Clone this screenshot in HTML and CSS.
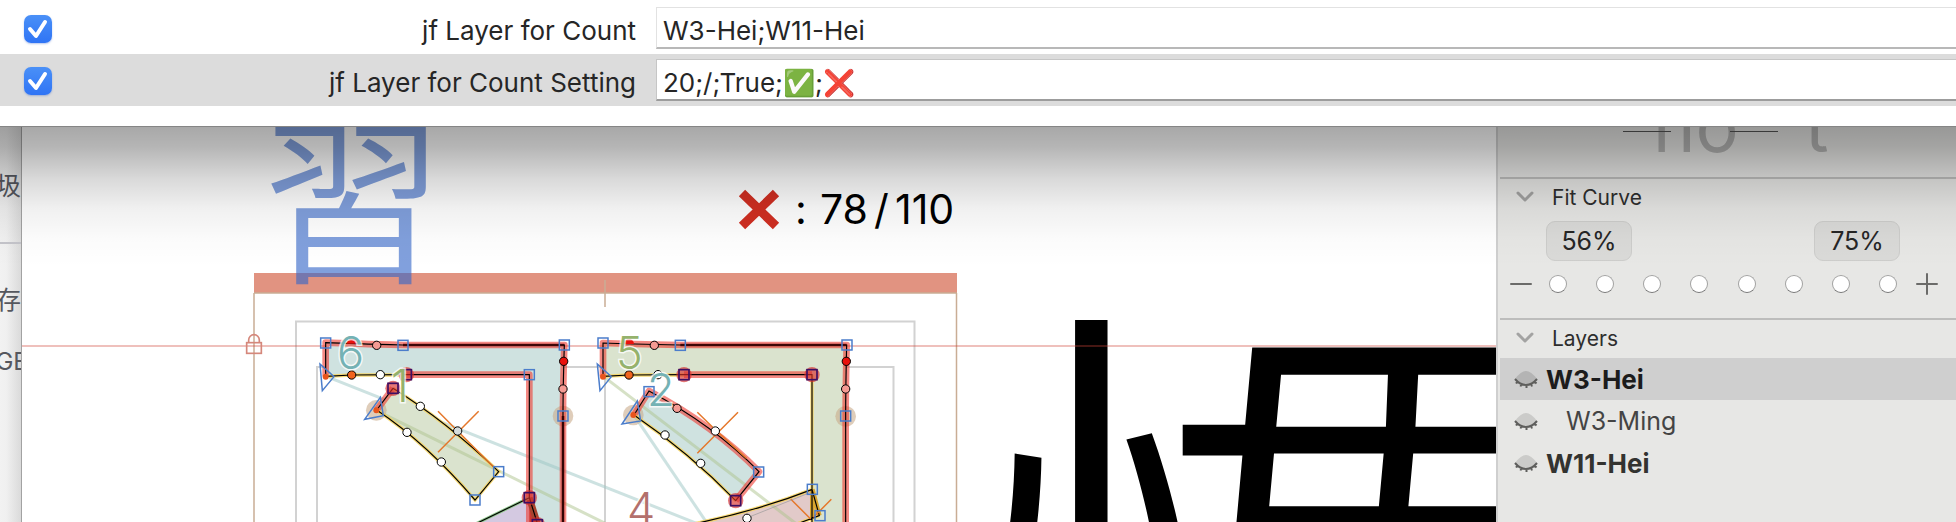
FILE: index.html
```html
<!DOCTYPE html>
<html lang="zh-Hant">
<head>
<meta charset="utf-8">
<title>Glyph Editor</title>
<link rel="stylesheet" href="styles.css">
</head>
<body>
<form class="sheet">
  <div class="param">
    <input class="check" type="checkbox" id="on1" checked aria-label="Enable jf Layer for Count">
    <label class="param-name" for="val1">jf Layer for Count</label>
    <div class="field"><input class="value" type="text" id="val1" value="W3-Hei;W11-Hei"></div>
  </div>
  <div class="param selected">
    <input class="check" type="checkbox" id="on2" checked aria-label="Enable jf Layer for Count Setting">
    <label class="param-name" for="val2">jf Layer for Count Setting</label>
    <div class="field"><input class="value" type="text" id="val2" value="20;/;True;✅;❌"></div>
  </div>
</form>
<main class="window">
  <aside class="behind">
    <span class="behind-text">圾</span>
    <hr class="behind-rule">
    <span class="behind-text">存</span>
    <span class="behind-text unit">GB</span>
  </aside>
  <svg class="canvas" viewBox="22 127 1474 395" preserveAspectRatio="xMinYMin slice" role="img" aria-label="Glyph outlines">
    <defs>
      <rect id="node" x="-15" y="-15" width="30" height="30" class="node"/>
      <g id="stem"><circle r="23" class="halo-red"/><rect x="-15" y="-15" width="30" height="30" class="node-dark"/></g>
      <circle id="ctl" r="12.5" class="ctl"/>
    </defs>
    <rect x="254" y="273" width="703" height="20" class="bar"/>
    <text x="262" y="269" class="ghost">習</text>
    <text x="957" y="907" class="big">慣</text>
    <path d="M254 293H957" class="metric"/>
    <path d="M254 293V530M956.500 293V530M605 280V307" class="metric"/>
    <path d="M296 530V321.500H914.500V530M317 530V367H893.500V530M605 367V530" class="frame"/>
    <path d="M22 346H1496" class="guide"/>

    <g transform="translate(240 310) scale(.333333)">
      <g class="lock"><rect x="20" y="98" width="44" height="32"/><path d="M26 98V90A16 16 0 0 1 58 90V98"/></g>
      <path d="M257 98Q335 101 489 105H973Q969 237 969 318V660H898L868 563V194H499L257 199Z" class="fill-teal"/>
      <path d="M868 563L700 645H892Z" class="fill-violet"/>
      <path d="M892 640L868 563V660Z" class="fill-dark"/>
      <path d="M268 203L1370 640" class="link-teal"/>
      <path d="M459 235Q620 335 776 485L705 570Q560 400 410 300Z" class="fill-green"/>
      <path d="M410 302L1110 647" class="link-green"/>
      <circle cx="409" cy="301" r="31" class="start"/><circle cx="969" cy="318" r="31" class="start"/>
      <path d="M257 199L257 98Q335 101 489 105H973Q969 237 969 318V660M499 194H868V660M410 300L459 235" class="glow-red"/>
      <path d="M489 105H973M969 318V660" class="core"/>
      <path d="M868 563L892 640" class="glow-dark"/>
      <path d="M257 199L335 195H499M459 235Q620 335 776 485L705 570Q560 400 410 300" class="glow-yellow"/>
      <path d="M868 563L700 645" class="glow-lime"/>
      <path d="M257 199L257 98Q335 101 489 105H973Q969 237 969 318V660M257 199L335 195L499 194H868V563L892 640M868 563L700 645M459 235Q620 335 776 485L705 570Q560 400 410 300Z" class="ink"/>
      <path d="M594 304L652 362L760 470M716 304L594 427" class="cross"/>
      <circle cx="257" cy="200" r="9" class="dot"/><circle cx="409" cy="301" r="9" class="dot"/>
      <path d="M240 162L282 200L247 242ZM421 262L430 317L374 328Z" class="arrow"/>
      <use href="#node" x="257" y="99"/><use href="#node" x="489" y="106"/><use href="#node" x="973" y="105"/><use href="#node" x="868" y="194"/>
      <use href="#node" x="776" y="485"/><use href="#node" x="705" y="570"/><use href="#node" x="969" y="318"/>
      <use href="#stem" x="499" y="194"/><use href="#stem" x="459" y="235"/><use href="#stem" x="868" y="563"/><use href="#stem" x="892" y="644"/>
      <path d="M320 101A15 15 0 0 1 350 101Z" class="red-cap"/>
      <use href="#ctl" x="410" y="106" class="pink"/><use href="#ctl" x="335" y="195" class="orange"/><use href="#ctl" x="421" y="194" class="white"/>
      <use href="#ctl" x="971" y="154" class="red"/><use href="#ctl" x="969" y="237" class="pink"/>
      <use href="#ctl" x="541" y="289" class="white"/><use href="#ctl" x="653" y="363" class="grey"/><use href="#ctl" x="604" y="456" class="white"/><use href="#ctl" x="501" y="367" class="white"/>
    </g>

    <g transform="translate(580 310) scale(.333333)">
      <path d="M69 99Q147 102 301 105H800Q797 237 797 318V660H696V194H312L69 199Z" class="fill-green"/>
      <path d="M340 642Q540 600 697 538L718 617L640 642Z" class="fill-rose"/>
      <path d="M207 243Q400 345 537 485L467 572Q330 430 162 315Z" class="fill-teal"/>
      <path d="M75 203L660 650" class="link-green"/>
      <path d="M165 320L385 645" class="link-teal"/>
      <circle cx="160" cy="315" r="31" class="start"/><circle cx="797" cy="319" r="31" class="start"/>
      <path d="M69 199V99Q147 102 301 105H800Q797 237 797 318V660M312 194H696M162 315L207 243Q400 345 537 485L467 572" class="glow-red"/>
      <path d="M301 105H800" class="core"/>
      <path d="M69 199L147 195H312M696 194V538M696 625V660M467 572Q330 430 162 315M340 642Q540 600 697 538M718 617L650 642" class="glow-yellow"/>
      <path d="M697 538L718 617M697 538V625" class="glow-gold"/>
      <path d="M69 199V99Q147 102 301 105H800Q797 237 797 318V660M69 199L147 195L312 194H696V538L718 617L650 642M696 538V660M340 642Q540 600 697 538M207 243Q400 345 537 485L467 572Q330 430 162 315Z" class="ink"/>
      <path d="M352 307L412 365L500 445M474 307L352 430M632 567L692 627M754 568L700 622" class="cross"/>
      <path d="M510 620L692 547" class="handle"/>
      <circle cx="69" cy="200" r="9" class="dot"/><circle cx="160" cy="315" r="9" class="dot"/>
      <path d="M52 162L94 200L60 242ZM172 273L182 333L126 342Z" class="arrow"/>
      <use href="#node" x="69" y="99"/><use href="#node" x="301" y="106"/><use href="#node" x="801" y="105"/><use href="#node" x="207" y="245"/>
      <use href="#node" x="536" y="486"/><use href="#node" x="797" y="318"/><use href="#node" x="697" y="538"/><use href="#node" x="720" y="617"/>
      <use href="#stem" x="312" y="194"/><use href="#stem" x="696" y="194"/><use href="#stem" x="467" y="572"/>
      <path d="M132 102A15 15 0 0 1 162 102Z" class="red-cap"/>
      <use href="#ctl" x="223" y="106" class="pink"/><use href="#ctl" x="147" y="195" class="orange"/><use href="#ctl" x="234" y="194" class="white"/>
      <use href="#ctl" x="799" y="154" class="red"/><use href="#ctl" x="797" y="237" class="pink"/>
      <use href="#ctl" x="291" y="295" class="pink"/><use href="#ctl" x="406" y="363" class="white"/><use href="#ctl" x="362" y="460" class="white"/><use href="#ctl" x="255" y="375" class="white"/><use href="#ctl" x="501" y="625" class="white"/>
    </g>

    <text x="337" y="369" class="num teal">6</text>
    <text x="391" y="402" class="num green">1</text>
    <text x="616" y="369" class="num green">5</text>
    <text x="647" y="406" class="num teal">2</text>
    <text x="627" y="525" class="num rose">4</text>

    <path d="M742 193L776 226M776 193L742 226" class="fail"/>
    <text y="224" class="score"><tspan x="795">:</tspan> <tspan x="820">78</tspan> <tspan x="874">/</tspan> <tspan x="895">110</tspan></text>
  </svg>
  <aside class="sidebar">
    <svg class="preview" viewBox="0 0 456 50" width="456" height="50" aria-label="Spacing preview">
      <text y="25" class="sample"><tspan x="153">no</tspan> <tspan x="305">t</tspan></text>
      <path d="M123 4.500H171M230 4.500H278" class="sample-line"/>
    </svg>
    <section class="panel">
      <h2 class="title"><svg class="chevron" viewBox="0 0 18 12"><path d="M2 2L9 9L16 2"/></svg>Fit Curve</h2>
      <div class="percents"><button type="button" class="percent">56%</button><button type="button" class="percent">75%</button></div>
      <div class="steps">
        <button type="button" class="step" aria-label="Less"><svg viewBox="0 0 22 22"><path d="M1 11H21"/></svg></button>
        <div class="dots">
          <button type="button" class="knob" aria-label="Fit 1"></button><button type="button" class="knob" aria-label="Fit 2"></button><button type="button" class="knob" aria-label="Fit 3"></button><button type="button" class="knob" aria-label="Fit 4"></button><button type="button" class="knob" aria-label="Fit 5"></button><button type="button" class="knob" aria-label="Fit 6"></button><button type="button" class="knob" aria-label="Fit 7"></button><button type="button" class="knob" aria-label="Fit 8"></button>
        </div>
        <button type="button" class="step" aria-label="More"><svg viewBox="0 0 22 22"><path d="M1 11H21M11 1V21"/></svg></button>
      </div>
    </section>
    <section class="panel">
      <h2 class="title"><svg class="chevron" viewBox="0 0 18 12"><path d="M2 2L9 9L16 2"/></svg>Layers</h2>
      <ul class="layers">
        <li class="layer master active"><svg class="eye" viewBox="0 0 24 19"><path class="lid" d="M1 9Q7 1 12 1T23 9Q18 15 12 15T1 9Z"/><path class="lash" d="M1 9Q6 15 12 15T23 9M3.500 11.500L2 13.500M7.500 14L6.500 16.500M12.500 15V18M17 14L18 16.500M20.500 11.500L22.500 13.500"/></svg>W3-Hei</li>
        <li class="layer child"><svg class="eye" viewBox="0 0 24 19"><path class="lid" d="M1 9Q7 1 12 1T23 9Q18 15 12 15T1 9Z"/><path class="lash" d="M1 9Q6 15 12 15T23 9M3.500 11.500L2 13.500M7.500 14L6.500 16.500M12.500 15V18M17 14L18 16.500M20.500 11.500L22.500 13.500"/></svg>W3-Ming</li>
        <li class="layer master"><svg class="eye" viewBox="0 0 24 19"><path class="lid" d="M1 9Q7 1 12 1T23 9Q18 15 12 15T1 9Z"/><path class="lash" d="M1 9Q6 15 12 15T23 9M3.500 11.500L2 13.500M7.500 14L6.500 16.500M12.500 15V18M17 14L18 16.500M20.500 11.500L22.500 13.500"/></svg>W11-Hei</li>
      </ul>
    </section>
  </aside>
</main>
</body>
</html>
```
FILE: styles.css
```css
* { box-sizing: border-box; }
body {
  margin: 0;
  min-height: 100vh;
  display: flex;
  flex-direction: column;
  background: #fff;
  color: #262626;
  font-family: Inter, "Liberation Sans", "Noto Sans CJK TC", sans-serif;
  overflow: hidden;
}
button { font: inherit; color: inherit; padding: 0; border: 0; background: none; }

/* parameter sheet */
.sheet { padding-bottom: 20px; border-bottom: 1px solid #858585; }
.param {
  display: grid;
  grid-template-columns: 28px 584px 1fr;
  align-items: center;
  padding: 5px 0 5px 24px;
  height: 52px;
}
.param:first-child { height: 54px; padding-top: 7px; }
.selected { background: #dcdcdc; }
.check {
  appearance: none;
  margin: 2px 0 0;
  width: 28px;
  height: 28px;
  border-radius: 7px;
  box-shadow: 0 1px 2px rgba(40, 90, 200, .35);
  background: url("data:image/svg+xml,%3Csvg xmlns='http://www.w3.org/2000/svg' viewBox='0 0 28 28'%3E%3Cpath d='M6 14L12 21L21 7' fill='none' stroke='white' stroke-width='4' stroke-linecap='round' stroke-linejoin='round'/%3E%3C/svg%3E"), linear-gradient(#4a90f7, #2f74f5);
}
.param-name { text-align: right; font-size: 26px; line-height: 36px; padding-top: 6px; }
.field { margin-left: 20px; }
.value {
  display: block;
  width: 100%;
  height: 42px;
  padding: 6px 6px 0;
  border: 1px solid #e2e2e2;
  border-right: 0;
  border-bottom: 2px solid #b8b8b8;
  border-radius: 0;
  background: #fff;
  color: #262626;
  font: inherit;
  font-size: 26px;
  outline: 0;
}
.selected .value { border-color: #c6c6c6 #c6c6c6 #9c9c9c; }

/* window under the sheet, darkened by the sheet's shadow */
.window { flex: 1; display: flex; position: relative; }
.window::after {
  content: "";
  position: absolute;
  inset: 0 0 auto 0;
  height: 140px;
  pointer-events: none;
  background: linear-gradient(rgba(0,0,0,.34), rgba(0,0,0,.29) 14%, rgba(0,0,0,.15) 37%, rgba(0,0,0,.06) 58%, rgba(0,0,0,.015) 80%, rgba(0,0,0,0));
}
.behind {
  width: 22px;
  flex: none;
  overflow: hidden;
  padding-top: 39px;
  display: flex;
  flex-direction: column;
  align-items: flex-end;
  background: linear-gradient(90deg, #f2f2f2, #f0f0f0 30%, #dadada);
  border-right: 1px solid #a2a2a2;
  color: #55575e;
}
.behind-text { font-size: 25px; line-height: 40px; white-space: nowrap; }
.behind-rule { width: 100%; height: 2px; margin: 36px 0; border: 0; background: #c4c4ca; flex: none; }
.unit { font-size: 24px; margin: 22px -8px 0 0; }

/* edit canvas */
.canvas { flex: 1; min-width: 0; display: block; background: #fff; }
.canvas path { fill: none; }
.bar { fill: #e19381; }
.ghost { font: 350 182px "Noto Sans CJK TC", sans-serif; fill: #3466c8; fill-opacity: .62; }
.big { font: 300 703px "Noto Sans CJK TC", sans-serif; fill: #000; }
.metric { stroke: #c9ad95; stroke-width: 1.5; }
.frame { stroke: #d2d2d2; stroke-width: 2; }
.guide { stroke: #d0453a; stroke-opacity: .45; stroke-width: 1.5; }
.lock rect, .lock path { fill: none; stroke: #d5877b; stroke-width: 5; }
.canvas .fill-teal { fill: #cfe2e0; }
.canvas .fill-green { fill: #dae3ce; }
.canvas .fill-violet { fill: #d4c9e1; }
.canvas .fill-rose { fill: #e2cac9; }
.canvas .fill-dark { fill: #a43434; }
.link-teal { stroke: #9cc6c4; stroke-opacity: .5; stroke-width: 9; }
.link-green { stroke: #adc48e; stroke-opacity: .5; stroke-width: 9; }
.start { fill: #c9ab8c; fill-opacity: .6; }
.glow-red { stroke: #ee3a30; stroke-opacity: .6; stroke-width: 20; stroke-linejoin: round; }
.core { stroke: #7c0c0c; stroke-width: 8; }
.glow-dark { stroke: #a8442f; stroke-width: 20; }
.glow-yellow { stroke: #f6d35e; stroke-opacity: .85; stroke-width: 10; }
.glow-gold { stroke: #d9a52e; stroke-width: 14; }
.glow-lime { stroke: #8fc88c; stroke-width: 9; }
.ink { stroke: #000; stroke-width: 3.5; }
.cross { stroke: #e5782c; stroke-width: 4.5; }
.handle { stroke: #999; stroke-width: 2; }
.dot { fill: #e8541c; }
.arrow { stroke: #4b7dcb; stroke-width: 4.5; }
.node { fill: none; stroke: #4b7dcb; stroke-width: 4.5; }
.node-dark { fill: none; stroke: #3d0e63; stroke-width: 5; }
.halo-red { fill: #d8302c; fill-opacity: .65; }
.ctl { stroke: #000; stroke-width: 3; }
.white { fill: #fff; }
.pink { fill: #f59a93; }
.red { fill: #e8110c; }
.orange { fill: #f0641e; }
.grey { fill: #d5dcdc; }
.canvas .red-cap { fill: #e8110c; }
.num { font: 300 45px Inter, sans-serif; paint-order: stroke; stroke: #fff; stroke-opacity: .8; stroke-width: 3; }
.teal { fill: #74b2b4; }
.green { fill: #95b26c; }
.rose { fill: #b3706c; }
.fail { stroke: #d12f22; stroke-width: 9; }
.score { font: 41px Inter, sans-serif; fill: #000; }

/* sidebar */
.sidebar { flex: none; width: 460px; padding-left: 2px; border-left: 2px solid #cfcfcf; background: #e7e7e5; }
.preview { display: block; width: 100%; overflow: hidden; }
.sample { font: 72px Inter, sans-serif; fill: #b4b4b3; }
.sample-line { stroke: #555; }
.panel { border-top: 2px solid #bdbdbc; padding-bottom: 11px; }
.title { display: flex; align-items: center; gap: 18px; height: 36px; margin: 0 0 2px; padding-left: 16px; font-size: 21px; font-weight: 400; color: #2e2e2e; }
.chevron { width: 18px; height: 12px; fill: none; stroke: #a3a3a2; stroke-width: 3; stroke-linecap: round; stroke-linejoin: round; }
.percents { display: flex; justify-content: space-between; padding: 4px 56px 0 46px; }
.percent { width: 86px; height: 40px; border: 1px solid #cdcdcb; border-radius: 9px; background: #dadad8; font-size: 25px; }
.steps { display: flex; align-items: center; height: 46px; padding: 0 18px 0 10px; }
.step { width: 22px; height: 22px; }
.step svg { display: block; fill: none; stroke: #6b6b69; stroke-width: 2; stroke-linecap: round; }
.dots { flex: 1; display: flex; justify-content: space-between; padding: 0 19px 0 17px; }
.knob { width: 18px; height: 18px; border: 1px solid #a2a2a1; border-bottom-color: #777; border-radius: 50%; background: #fff; }
.layers { list-style: none; margin: 0; padding: 0; }
.layer { display: flex; align-items: center; gap: 8px; height: 42px; padding-left: 14px; font-size: 25px; color: #444; }
.master { font-size: 26px; font-weight: 700; color: #333330; }
.active { background: #cfcfcf; color: #1c1c1c; }
.child { gap: 28px; }
.eye { width: 24px; height: 19px; }
.lid { fill: #cbcbc9; }
.active .lid { fill: #b4b4b4; }
.lash { fill: none; stroke: #5e5e5c; stroke-width: 2; }
```
